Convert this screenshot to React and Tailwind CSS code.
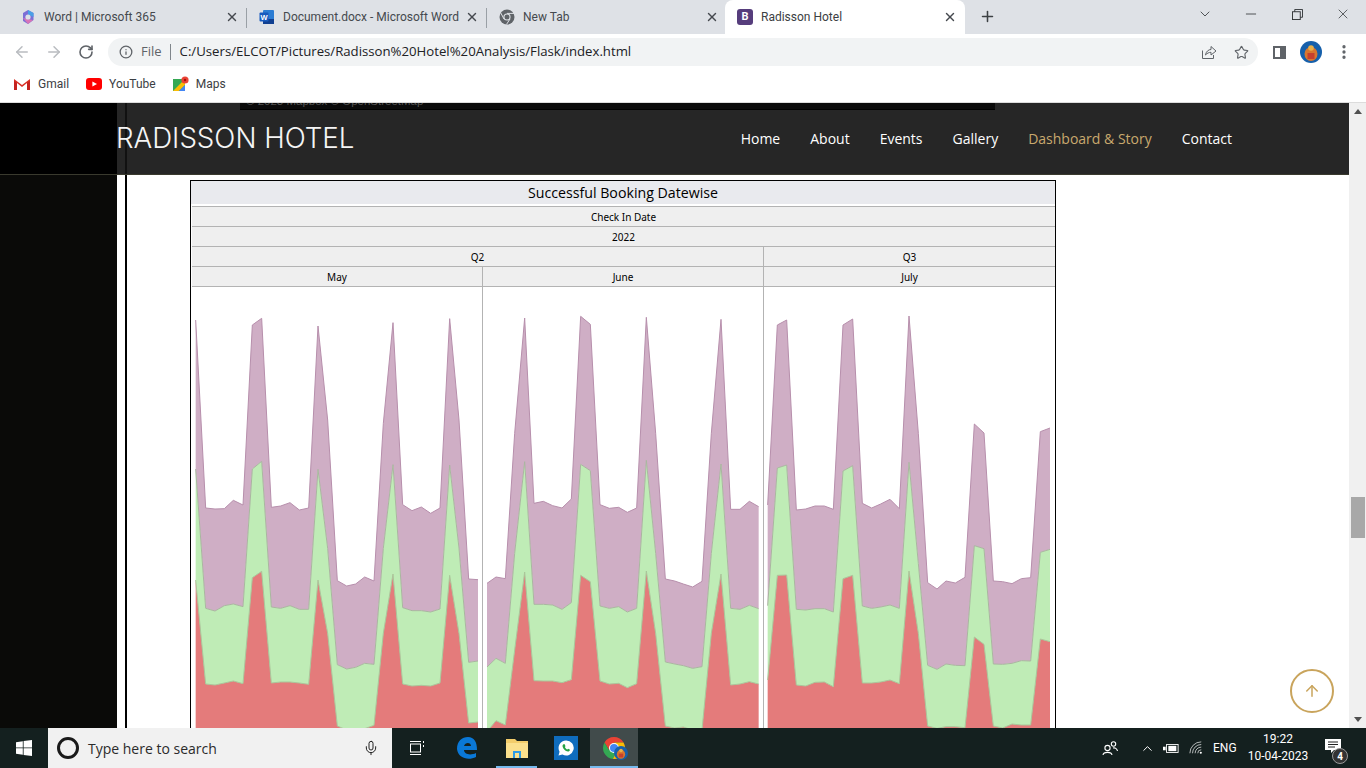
import {
  ArrowLeft,
  ArrowRight,
  ArrowUp,
  ChevronDown,
  ChevronUp,
  Info,
  Minus,
  Mic,
  MoreVertical,
  Plus,
  RotateCw,
  Star,
  X,
} from "lucide-react";

const UI_FONT = "font-['Roboto','Open_Sans',sans-serif]";

// chart points are read off the reference at 3x, so every svg uses a 3x viewBox
const mayTop = "17,60 47,624 75,627 103,626 130,601 159,615 187,75 215,55 244,622 272,618 300,608 328,630 356,624 384,78 413,360 442,842 470,858 497,852 524,831 552,843 580,370 609,68 638,614 666,632 694,621 722,640 750,624 779,56 807,360 836,837 864,839";
const mayMid = "17,507 47,925 75,933 103,917 130,912 159,920 187,507 215,484 244,921 272,925 300,917 328,928 356,928 384,508 413,745 442,1094 470,1107 497,1102 524,1090 552,1093 580,745 609,494 638,923 666,932 694,932 722,936 750,927 779,495 807,745 836,1087 864,1083";
const mayLow = "17,840 47,1152 75,1155 103,1149 130,1143 159,1151 187,833 215,814 244,1149 272,1146 300,1146 328,1149 356,1153 384,840 413,1000 442,1278 470,1290 497,1290 524,1286 552,1276 580,1000 609,822 638,1152 666,1158 694,1156 722,1158 750,1149 779,826 807,1000 836,1269 864,1266";

const juneTop = "21,850 48,831 76,836 104,400 134,54 162,610 190,604 218,617 246,624 274,597 302,49 331,73 360,614 388,625 416,622 442,637 470,624 499,52 527,400 556,837 584,843 610,852 638,861 666,844 694,400 723,58 752,628 780,628 808,604 836,620";
const juneMid = "21,1101 48,1075 76,1090 104,760 134,485 162,913 190,913 218,915 246,928 274,908 302,493 331,512 360,918 388,925 416,920 442,936 470,925 499,481 527,760 556,1086 584,1092 610,1097 638,1105 666,1100 694,760 723,492 752,925 780,928 808,916 836,926";
const juneLow = "21,1292 30,1284 48,1262 76,1275 104,1050 134,816 162,1142 190,1143 218,1143 246,1148 274,1139 302,826 331,845 360,1143 388,1152 416,1150 442,1163 470,1151 499,813 527,1000 556,1278 584,1284 610,1281 638,1290 666,1290 694,1000 723,822 752,1155 780,1152 808,1145 836,1152";

const julyTop = "23,615 52,75 80,60 109,630 137,627 165,618 193,618 220,628 249,75 278,57 307,610 335,624 362,612 390,598 418,626 447,48 475,400 503,848 531,867 558,843 586,849 615,832 643,372 672,399 700,843 728,845 756,851 784,836 812,833 841,395 870,384";
const julyMid = "23,917 52,504 80,495 109,928 137,930 165,926 193,926 220,936 249,513 278,497 307,918 335,925 362,921 390,915 418,925 447,487 475,790 503,1096 531,1108 558,1092 586,1096 615,1097 643,737 672,746 700,1092 728,1093 756,1090 784,1082 812,1083 841,757 870,748";
const julyLow = "23,1140 52,826 80,825 109,1155 137,1158 165,1147 193,1146 220,1160 249,836 278,826 307,1149 335,1149 362,1146 390,1140 418,1151 447,813 475,1000 503,1278 531,1285 558,1280 586,1280 615,1283 643,1011 672,1033 700,1278 728,1284 756,1272 784,1275 812,1275 841,1017 870,1025";

function areaPath(upper, lower) {
  const back = lower.split(" ").reverse().join(" ");
  return `${upper} ${back}`;
}

function bottomPath(line) {
  const pts = line.split(" ");
  const first = pts[0].split(",")[0];
  const last = pts[pts.length - 1].split(",")[0];
  return `${line} ${last},1330 ${first},1330`;
}

function StackedArea({ top, mid, low, viewX, width, className }) {
  // the plot starts 13px above where the points were measured from
  return (
    <svg
      viewBox={`${viewX} -39 ${width * 3} 1323`}
      preserveAspectRatio="none"
      className={`block h-[441px] ${className}`}
    >
      <polygon points={areaPath(top, mid)} fill="#cfaec5" />
      <polygon points={areaPath(mid, low)} fill="#bfecb6" />
      <polygon points={bottomPath(low)} fill="#e47b7b" />
      <polyline points={top} fill="none" stroke="#b78fac" strokeWidth="3" />
      <polyline points={mid} fill="none" stroke="#aab5a0" strokeWidth="3" />
      <polyline points={low} fill="none" stroke="#a9c79a" strokeWidth="3" />
    </svg>
  );
}

function MicrosoftIcon() {
  return (
    <svg viewBox="0 0 16 16" className="w-4 h-4 shrink-0">
      <path d="M8 1 L13.5 4 V11 L8 15 L3 12 V4 Z" fill="#7c6fd6" />
      <path d="M8 1 L13.5 4 V8 L8 5.5 Z" fill="#4aa0e6" />
      <path d="M3 9 L8 15 L13 11 L8 10 Z" fill="#d774b8" />
      <circle cx="8" cy="8" r="2.6" fill="#dee1e6" />
    </svg>
  );
}

function WordIcon() {
  return (
    <svg viewBox="0 0 16 16" className="w-4 h-4 shrink-0">
      <rect x="4" y="1" width="11" height="14" rx="1" fill="#2b7cd3" />
      <rect x="4" y="10" width="11" height="5" fill="#103f91" />
      <rect x="0.5" y="3.5" width="9" height="9" rx="1" fill="#185abd" />
      <text x="5" y="10.8" textAnchor="middle" fontSize="7.5" fontWeight="700" fill="#fff" fontFamily="Liberation Sans">W</text>
    </svg>
  );
}

function ChromeIcon({ className }) {
  return (
    <svg viewBox="0 0 16 16" className={className}>
      <circle cx="8" cy="8" r="7.5" fill="#5f6368" />
      <circle cx="8" cy="8" r="3.6" fill="#dee1e6" />
      <circle cx="8" cy="8" r="2.5" fill="#5f6368" />
      <path d="M8 4.4 H15 M5 10 L1.8 4 M11 10 L7.5 15.4" stroke="#dee1e6" strokeWidth="1" />
    </svg>
  );
}

function ChromeColorIcon() {
  return (
    <svg viewBox="0 0 24 24" className="w-[24px] h-[24px]">
      <path d="M12 1 A11 11 0 0 1 21.5 6.5 L12 6.5 Z" fill="#ea4335" />
      <path d="M12 1 A11 11 0 0 0 2.5 6.5 L7 14 L12 7 Z" fill="#ea4335" />
      <path d="M2.5 6.5 A11 11 0 0 0 11 23 L16 14 L7 14 Z" fill="#34a853" />
      <path d="M21.5 6.5 A11 11 0 0 1 11 23 L16 12 L12 6.5 Z" fill="#fbbc04" />
      <circle cx="12" cy="12" r="5" fill="#fff" />
      <circle cx="12" cy="12" r="4" fill="#4285f4" />
    </svg>
  );
}

function Avatar({ className }) {
  return (
    <svg viewBox="0 0 22 22" className={className}>
      <circle cx="11" cy="11" r="11" fill="#1660ab" />
      <ellipse cx="11" cy="13" rx="6.5" ry="7" fill="#d9772e" />
      <circle cx="11" cy="7" r="2.8" fill="#e8b04a" />
      <rect x="7.5" y="12" width="7" height="6" fill="#c7402d" />
    </svg>
  );
}

function Tab({ icon, title, active, width, divider }) {
  return (
    <div
      className={`relative flex items-center h-full pl-3 pr-2 shrink-0 ${width} ${active ? "bg-white rounded-t-lg" : ""}`}
    >
      {icon}
      <span className={`ml-2 flex-1 overflow-hidden whitespace-nowrap text-[12px] ${active ? "text-[#3c4043]" : "text-[#45494e]"}`}>
        {title}
      </span>
      <X className="w-3.5 h-3.5 text-[#45494e] shrink-0 ml-1" strokeWidth={2.4} />
      {divider && <span className="absolute right-0 top-2 h-5 w-px bg-[#9aa0a6]" />}
    </div>
  );
}

function WindowButton({ children }) {
  return <span className="flex items-center justify-center w-[46px] h-full">{children}</span>;
}

function ChromeBars() {
  return (
    <div className={`bg-white border-b border-[#dcdcdc] ${UI_FONT}`}>
      <div className="flex items-end h-[34px] bg-[#dee1e6] pl-2">
        <Tab width="w-[239px]" divider icon={<MicrosoftIcon />} title="Word | Microsoft 365" />
        <Tab width="w-[240px]" divider icon={<WordIcon />} title="Document.docx - Microsoft Word" />
        <Tab width="w-[240px]" icon={<ChromeIcon className="w-4 h-4 shrink-0" />} title="New Tab" />
        <Tab
          width="w-[240px] -ml-[2px]"
          active
          icon={
            <span className="w-4 h-4 rounded-[3px] bg-[#563d7c] text-white text-[11px] font-bold flex items-center justify-center shrink-0">
              B
            </span>
          }
          title="Radisson Hotel"
        />
        <Plus className="w-[17px] h-[17px] text-[#3c4043] ml-[14px] mb-[9px]" strokeWidth={2.2} />
        <div className="flex-1" />
        <div className="flex items-center self-start h-[28px] text-[#2b2e31]">
          <WindowButton>
            <ChevronDown className="w-4 h-4" strokeWidth={1.2} />
          </WindowButton>
          <WindowButton>
            <Minus className="w-4 h-4" strokeWidth={1.2} />
          </WindowButton>
          <WindowButton>
            <svg viewBox="0 0 12 12" className="w-[11px] h-[11px]" fill="none" stroke="currentColor" strokeWidth="1">
              <rect x="0.5" y="3" width="8.5" height="8.5" />
              <path d="M3 3 V0.5 H11.5 V9 H9" />
            </svg>
          </WindowButton>
          <WindowButton>
            <X className="w-4 h-4" strokeWidth={1.1} />
          </WindowButton>
        </div>
      </div>

      <div className="flex items-center h-[36px] pl-[13px]">
        <ArrowLeft className="w-[18px] h-[18px] text-[#b9bcc0]" />
        <ArrowRight className="w-[18px] h-[18px] text-[#b9bcc0] ml-[14px]" />
        <RotateCw className="w-[16px] h-[16px] text-[#5f6368] ml-[15px]" strokeWidth={2.4} />
        <div className="flex items-center h-[28px] ml-[14px] w-[1150px] rounded-full bg-[#f1f3f4] pl-[11px] pr-[9px] font-['Open_Sans',sans-serif]">
          <Info className="w-[14px] h-[14px] text-[#5f6368]" strokeWidth={2.2} />
          <span className="ml-[8px] text-[13px] text-[#5f6368]">File</span>
          <span className="ml-[8px] mr-[9px] h-[16px] w-px bg-[#80868b]" />
          <span className="flex-1 text-[13.2px] text-[#202124] whitespace-nowrap">
            C:/Users/ELCOT/Pictures/Radisson%20Hotel%20Analysis/Flask/index.html
          </span>
          <svg viewBox="0 0 16 16" className="w-[16px] h-[16px] text-[#5f6368]" fill="none" stroke="currentColor" strokeWidth="1">
            <path d="M1.5 6.5 V14.5 H12.5 V11" />
            <path d="M4.5 11 C5 7.5 7.5 5.5 10 5.5 V2.5 L15 7 L10 11 V8.3 C8 8.3 6 9.2 4.5 11 Z" />
          </svg>
          <Star className="w-[15px] h-[15px] text-[#5f6368] ml-[17px]" strokeWidth={1.8} />
        </div>
        <span className="ml-[15px] w-[13px] h-[13px] border-2 border-r-[6px] border-[#5f6368]" />
        <Avatar className="w-[22px] h-[22px] ml-[14px]" />
        <MoreVertical className="w-[18px] h-[18px] text-[#5f6368] ml-[13px]" strokeWidth={2.4} />
      </div>

      <div className="flex items-center h-[32px] pb-[4px] pl-[14px] text-[12px] text-[#3c4043]">
        <svg viewBox="0 0 16 12" className="w-4 h-3">
          <path d="M0 12 V1 L8 7 L16 1 V12 H13 V5 L8 9 L3 5 V12 Z" fill="#d93025" />
          <path d="M3 12 V5 L0 3 V12 Z M13 12 V5 L16 3 V12 Z" fill="#c5221f" />
        </svg>
        <span className="ml-[8px]">Gmail</span>
        <svg viewBox="0 0 16 12" className="w-4 h-3 ml-[17px]">
          <rect width="16" height="12" rx="3" fill="#f00" />
          <path d="M6.4 3.4 L11 6 L6.4 8.6 Z" fill="#fff" />
        </svg>
        <span className="ml-[7px]">YouTube</span>
        <svg viewBox="0 0 16 16" className="w-4 h-4 ml-[17px]">
          <rect x="0" y="3" width="12" height="12" fill="#34a853" />
          <path d="M0 15 L12 3 V9 L6 15 Z" fill="#fbbc04" />
          <path d="M6 15 L12 9 V15 Z" fill="#4285f4" />
          <circle cx="12" cy="4" r="3.6" fill="#ea4335" />
          <circle cx="12" cy="4" r="1.2" fill="#a50e0e" />
        </svg>
        <span className="ml-[7px]">Maps</span>
      </div>
    </div>
  );
}

function SiteHeader() {
  const links = ["Home", "About", "Events", "Gallery", "Dashboard & Story", "Contact"];
  return (
    <header className="absolute left-0 right-[17px] top-0 z-10 flex h-[72px] border-b border-[#3a3a2e]">
      <div className="w-[117px] bg-black" />
      <div className="relative flex-1 flex items-center justify-between bg-[#262626]">
        {/* bottom of the map section, scrolled under the bar */}
        <div className="absolute left-[123px] top-0 w-[755px] h-[7px] bg-[#0a0a0a] border-b border-black overflow-hidden">
          <span className="block -mt-[10px] ml-[6px] text-[11.5px] text-[#555] whitespace-nowrap font-['Liberation_Sans',sans-serif]">
            © 2023 Mapbox © OpenStreetMap
          </span>
        </div>
        <span className="absolute left-[8px] top-0 bottom-0 w-[2px] bg-[#111]" />
        <span className="relative text-[27.7px] text-[#f5f5f5] font-['Inter',sans-serif] font-light whitespace-nowrap -ml-[1px]">
          RADISSON HOTEL
        </span>
        <nav className="flex items-center gap-[30px] pr-[117px] text-[14px] font-medium font-['Open_Sans',sans-serif]">
          {links.map((link) => (
            <a key={link} className={link.startsWith("Dashboard") ? "text-[#c9a96e]" : "text-white"}>
              {link}
            </a>
          ))}
        </nav>
      </div>
    </header>
  );
}

function HeaderRow({ children, className }) {
  return (
    <div className={`flex items-center justify-center h-5 pt-px border-b border-[#b3b3b3] bg-[#efefef] text-[10px] text-black ${className}`}>
      {children}
    </div>
  );
}

function Dashboard() {
  return (
    <div className="w-[866px] h-[560px] overflow-hidden mt-[5px] border border-black border-b-0 bg-white font-['Noto_Sans',sans-serif]">
      <div className="flex items-center justify-center h-[23px] bg-[#e9eaee] text-[14.2px] text-black font-['Open_Sans',sans-serif]">
        Successful Booking Datewise
      </div>
      <div className="ml-px mt-[2px] border-t border-[#b3b3b3]">
        <HeaderRow>Check In Date</HeaderRow>
        <HeaderRow>2022</HeaderRow>
        <div className="flex">
          <HeaderRow className="w-[572px] border-r">Q2</HeaderRow>
          <HeaderRow className="flex-1">Q3</HeaderRow>
        </div>
        <div className="flex">
          <HeaderRow className="w-[291px] border-r">May</HeaderRow>
          <HeaderRow className="w-[281px] border-r">June</HeaderRow>
          <HeaderRow className="flex-1">July</HeaderRow>
        </div>
        <div className="flex h-[441px]">
          <div className="w-[291px] border-r border-[#b3b3b3] shrink-0">
            <StackedArea top={mayTop} mid={mayMid} low={mayLow} viewX={6} width={290} className="w-[290px]" />
          </div>
          <div className="w-[281px] border-r border-[#b3b3b3] shrink-0">
            <StackedArea top={juneTop} mid={juneMid} low={juneLow} viewX={9} width={280} className="w-[280px]" />
          </div>
          <div className="flex-1">
            <StackedArea top={julyTop} mid={julyMid} low={julyLow} viewX={12} width={290} className="w-[290px]" />
          </div>
        </div>
      </div>
    </div>
  );
}

function Page() {
  return (
    <div className="relative flex-1 flex overflow-hidden bg-white">
      <SiteHeader />
      <div className="w-[117px] shrink-0 bg-[#0a0a08]" />
      <div className="flex-1 pl-[8px] min-w-0">
        <div className="h-full border-l-2 border-black pl-[63px] pt-[72px]">
          <Dashboard />
        </div>
      </div>
      <div className="absolute right-[32px] bottom-[15px] z-10 flex items-center justify-center w-11 h-11 rounded-full border-2 border-[#c9a45c]">
        <ArrowUp className="w-[18px] h-[18px] text-[#c9a45c]" strokeWidth={2} />
      </div>
      <div className="relative z-20 flex flex-col justify-between w-[17px] shrink-0 bg-[#f0f0f0]">
        <span className="flex justify-center pt-[6px]">
          <span className="w-0 h-0 border-x-[4px] border-x-transparent border-b-[5px] border-b-[#505050]" />
        </span>
        <span className="absolute top-[394px] left-[2px] right-[1px] h-[41px] bg-[#a8a8a8]" />
        <span className="flex justify-center pb-[6px]">
          <span className="w-0 h-0 border-x-[4px] border-x-transparent border-t-[5px] border-t-[#505050]" />
        </span>
      </div>
    </div>
  );
}

function Taskbar() {
  return (
    <div className={`flex items-center h-10 shrink-0 bg-[#14201f] text-white ${UI_FONT}`}>
      <div className="flex items-center justify-center w-[48px]">
        <svg viewBox="0 0 16 16" className="w-4 h-4">
          <path d="M0 2.2 L6.8 1.2 V7.5 H0 Z M7.6 1.1 L16 0 V7.5 H7.6 Z M0 8.3 H6.8 V14.7 L0 13.8 Z M7.6 8.3 H16 V16 L7.6 14.9 Z" fill="#fff" />
        </svg>
      </div>
      <div className="flex items-center w-[344px] h-full bg-[#f1f1f1] pl-[9px] pr-[13px] text-[#2b2b2b]">
        <span className="w-[22px] h-[22px] rounded-full border-[3px] border-[#1a1a1a]" />
        <span className="ml-[9px] flex-1 text-[14px] font-['Open_Sans',sans-serif]">Type here to search</span>
        <Mic className="w-[16px] h-[18px] text-[#222]" strokeWidth={1.5} />
      </div>
      <div className="flex items-center justify-center w-[50px]">
        <svg viewBox="0 0 16 16" className="w-4 h-4" fill="none" stroke="#fff" strokeWidth="1">
          <rect x="1.5" y="4" width="10" height="8" />
          <path d="M1 1.5 H12 M1 14.5 H12 M14.5 1 V3 M14.5 5 V7" />
        </svg>
      </div>
      <div className="flex items-center justify-center w-[50px] h-full">
        <svg viewBox="0 0 24 24" className="w-[24px] h-[24px]">
          <path d="M2 13 C2 5 7 1 13 1 C19 1 22 6 22 14 H9 C9 18 15 20 21 17 V21 C13 25 3 22 2 13 Z M9 10 H16 C16 6 10 6 9 10 Z" fill="#0a78d7" />
        </svg>
      </div>
      <div className="flex flex-col items-center justify-center relative w-[49px] h-full">
        <svg viewBox="0 0 24 22" className="w-[24px] h-[22px]">
          <path d="M1 2 H10 L12 4 H23 V21 H1 Z" fill="#f3cd6b" />
          <path d="M1 6 H23 V21 H1 Z" fill="#fbe08d" />
          <path d="M8 21 V14 H16 V21 H14 V16 H10 V21 Z" fill="#2e9ce6" />
        </svg>
        <span className="absolute bottom-0 inset-x-1 h-[2px] bg-[#76b9ed]" />
      </div>
      <div className="flex items-center justify-center w-[49px]">
        <span className="flex items-center justify-center w-6 h-6 bg-[#0f6cbd]">
          <svg viewBox="0 0 24 24" className="w-[18px] h-[18px]">
            <path d="M12 2 A10 10 0 0 0 3.4 17 L2 22 L7.2 20.6 A10 10 0 1 0 12 2 Z" fill="#fff" />
            <path d="M8.5 7 C7 8 7 10 8.5 12.5 C10.5 15.5 13.5 17 15.5 16.5 C17 16 17.5 14.5 17 14 L14.8 13 L13.8 14 C12.5 13.5 11 12 10.5 10.5 L11.3 9.5 L10.3 7 Z" fill="#25a244" />
          </svg>
        </span>
      </div>
      <div className="relative flex items-center justify-center w-[48px] h-full bg-[#414b4b]">
        <ChromeColorIcon />
        <Avatar className="absolute left-[24px] top-[18px] w-[14px] h-[14px]" />
        <span className="absolute bottom-0 inset-x-0 h-[2px] bg-[#76b9ed]" />
      </div>

      <div className="flex-1" />

      <svg viewBox="0 0 16 16" className="w-4 h-4 mr-[22px]" fill="none" stroke="#fff" strokeWidth="1.1">
        <circle cx="5.5" cy="8" r="2.6" />
        <path d="M1 15 C1.5 11.5 9.5 11.5 10 15" />
        <circle cx="11.5" cy="4" r="2.2" />
        <path d="M11 8 C13 7.5 15 8.5 15.5 11" />
      </svg>
      <ChevronUp className="w-[15px] h-[15px] text-white mr-[8px]" strokeWidth={1.6} />
      <svg viewBox="0 0 18 12" className="w-[16px] h-[11px] mr-[10px]">
        <rect x="4" y="1.5" width="13" height="9" fill="none" stroke="#fff" strokeWidth="1" />
        <rect x="6" y="3" width="9" height="6" fill="#fff" />
        <path d="M0 4 H3 V8 H0 Z" fill="#fff" />
      </svg>
      <svg viewBox="0 0 16 16" className="w-[14px] h-[14px] mr-[10px]" fill="none" stroke="#c9cdcd" strokeWidth="1">
        <path d="M1 14 A13 13 0 0 1 14 1 M4 14 A10 10 0 0 1 14 4 M7 14 A7 7 0 0 1 14 7 M10 14 A4 4 0 0 1 14 10" />
        <circle cx="13.5" cy="13.5" r="1.2" fill="#fff" stroke="none" />
      </svg>
      <span className="w-[23px] text-[12px] mr-[12px] whitespace-nowrap">ENG</span>
      <div className="flex flex-col items-center text-[12px] leading-[17px] w-[60px] mr-[17px] whitespace-nowrap">
        <span>19:22</span>
        <span>10-04-2023</span>
      </div>
      <div className="relative w-[41px] h-full flex items-center">
        <svg viewBox="0 0 16 16" className="w-4 h-4 -mt-[4px]">
          <path d="M0 1 H16 V12 H9 L6 15 V12 H0 Z" fill="#fff" />
          <path d="M3 4 H13 M3 6.5 H13 M3 9 H10" stroke="#222" strokeWidth="1" />
        </svg>
        <span className="absolute left-[7px] top-[20px] flex items-center justify-center w-4 h-4 rounded-full bg-[#333] border border-[#999] text-[10px] font-bold">
          4
        </span>
      </div>
    </div>
  );
}

export default function App() {
  return (
    <div className="flex flex-col w-[1366px] h-[768px] overflow-hidden">
      <ChromeBars />
      <Page />
      <Taskbar />
    </div>
  );
}
